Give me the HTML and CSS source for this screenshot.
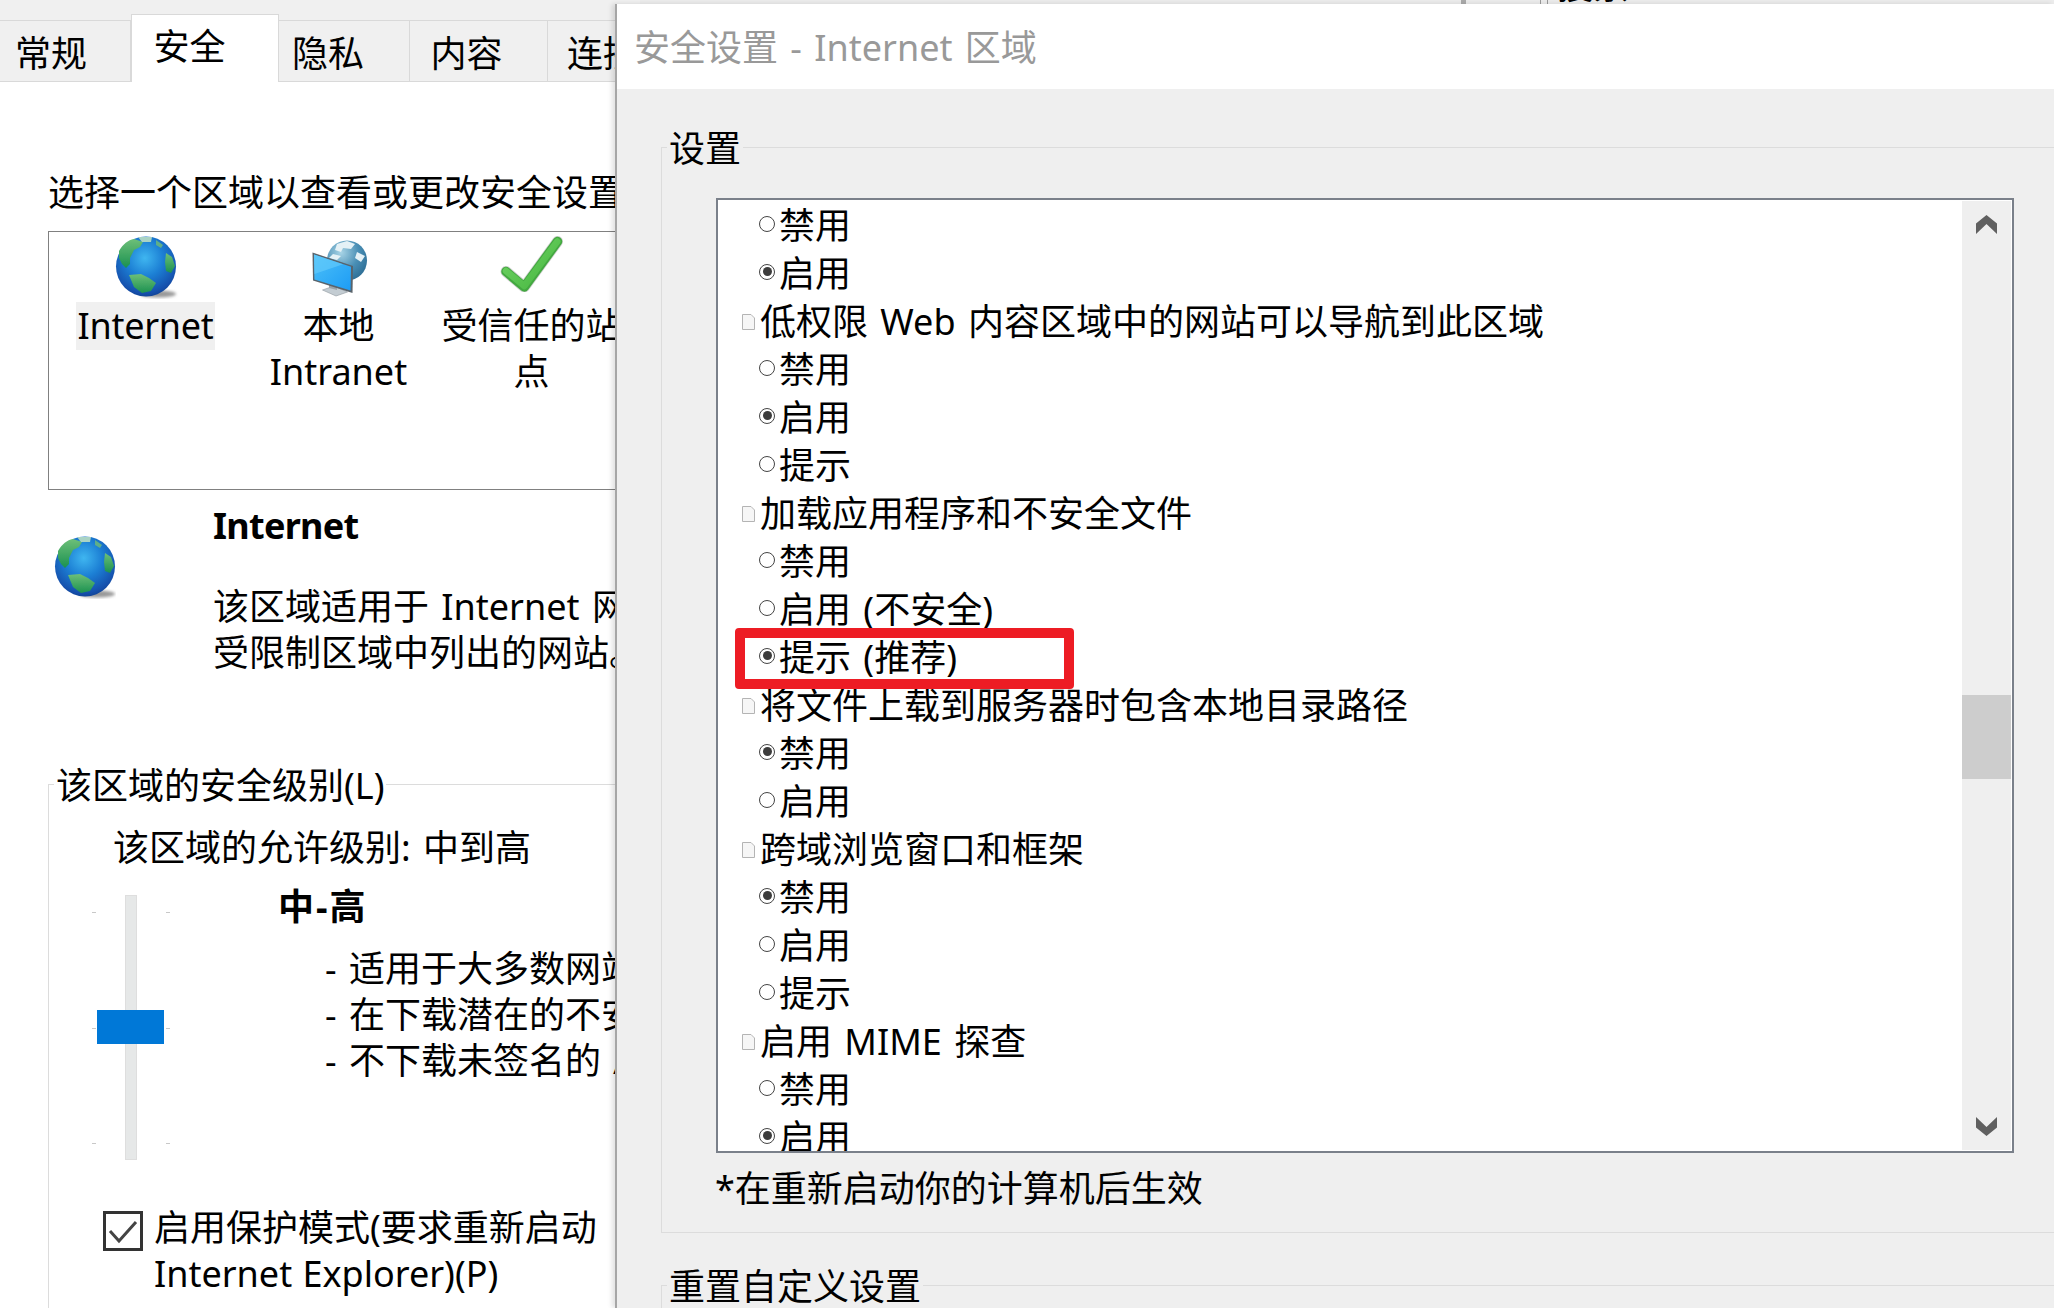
FILE: index.html
```html
<!DOCTYPE html>
<html lang="zh-CN">
<head>
<meta charset="utf-8">
<title>安全设置 - Internet 区域</title>
<link rel="stylesheet" href="styles.css">
</head>
<body>
<svg class="defs" width="0" height="0" aria-hidden="true">
  <defs>
    <radialGradient id="sea" cx="0.48" cy="0.36" r="0.68">
      <stop offset="0" stop-color="#3fb6f0"/>
      <stop offset="0.45" stop-color="#1c7fd4"/>
      <stop offset="0.85" stop-color="#1550ad"/>
      <stop offset="1" stop-color="#103f8c"/>
    </radialGradient>
    <linearGradient id="land" x1="0" y1="0" x2="0" y2="1">
      <stop offset="0" stop-color="#6dbf78"/>
      <stop offset="1" stop-color="#1a9150"/>
    </linearGradient>
    <radialGradient id="sea2" cx="0.35" cy="0.3" r="0.8">
      <stop offset="0" stop-color="#a8d4e6"/>
      <stop offset="0.55" stop-color="#4a8fb5"/>
      <stop offset="1" stop-color="#2a6a92"/>
    </radialGradient>
    <linearGradient id="screen" x1="0" y1="0" x2="1" y2="1">
      <stop offset="0" stop-color="#4cc0f8"/>
      <stop offset="1" stop-color="#1d9cf5"/>
    </linearGradient>
    <linearGradient id="tick" x1="0" y1="0" x2="1" y2="1">
      <stop offset="0" stop-color="#72d466"/>
      <stop offset="1" stop-color="#45b63f"/>
    </linearGradient>
    <filter id="soft"><feGaussianBlur stdDeviation="0.7"/></filter>
    <filter id="soft2"><feGaussianBlur stdDeviation="1.4"/></filter>
    <g id="globe">
      <ellipse cx="52" cy="62" rx="18" ry="3.5" fill="#999" filter="url(#soft2)"/>
      <circle cx="40" cy="34.5" r="30" fill="url(#sea)"/>
      <g transform="translate(10 4)" filter="url(#soft)">
        <path d="M3 15 C7 8 12 4 18 3 L27 6 L24 11 L18 14 L14 22 L14 28 L10 32 L6 28 L3 22 Z" fill="url(#land)"/>
        <path d="M50 17 L56 21 L59 30 L55 37 L50 35 L49 26 Z" fill="url(#land)"/>
        <path d="M13 39 L25 38 L33 42 L40 47 L35 55 L26 57 L18 51 Z" fill="url(#land)"/>
        <path d="M22 1 L36 1 L35 6 L26 6 Z" fill="#a9d3c4"/>
        <path d="M40 4 L47 9 L45 12 L40 9 Z" fill="#5fae88"/>
      </g>
    </g>
  </defs>
</svg>

<div class="backdrop">
  <span class="backdrop-shade"></span>
  <span class="backdrop-rule"></span>
  <span class="backdrop-rule second"></span>
  <span class="backdrop-text">搜索</span>
</div>

<section class="window options">
  <nav class="tabs">
    <span class="tab t1">常规</span>
    <span class="tab t2 active">安全</span>
    <span class="tab t3">隐私</span>
    <span class="tab t4">内容</span>
    <span class="tab t5">连接</span>
  </nav>
  <div class="pane">
    <p class="prompt">选择一个区域以查看或更改安全设置。</p>
    <div class="zones">
      <div class="zone">
        <svg class="zone-icon" viewBox="0 0 80 70"><use href="#globe"/></svg>
        <span class="zone-label selected">Internet</span>
      </div>
      <div class="zone">
        <svg class="zone-icon" viewBox="0 0 80 70">
          <circle cx="48" cy="28.5" r="20" fill="url(#sea2)"/>
          <path d="M38 12 L48 9 L56 12 L52 17 L44 16 L42 20 L36 18 Z M58 20 L66 24 L62 30 L56 26 Z M34 22 L42 24 L38 28 L30 26 Z" fill="#e4f1f6" filter="url(#soft)"/>
          <path d="M23.5 58 L35 54 L48.5 60 L37 64 Z" fill="#c3ccd2" stroke="#8e979d" stroke-width="0.6"/>
          <path d="M30 51 L30 56 L38 58 L38 54 Z" fill="#9aa2a8"/>
          <path d="M13.5 20.5 L54 34 L53.5 61 L14 48.5 Z" fill="#59636b"/>
          <path d="M15 22.5 L52 34.8 L51.6 58.6 L15.4 47.4 Z" fill="url(#screen)"/>
          <path d="M15 22.5 L44 32.2 L15.4 42 Z" fill="#67cdfb" opacity="0.6"/>
        </svg>
        <span class="zone-label">本地 Intranet</span>
      </div>
      <div class="zone">
        <svg class="zone-icon" viewBox="0 0 80 70">
          <polyline points="14,39.5 32.3,55 65.5,9.5" fill="none" stroke="#9a9a9a" stroke-width="11" stroke-linecap="round" stroke-linejoin="round" opacity="0.45" filter="url(#soft)"/>
          <polyline points="14,39.5 32.3,55 65.5,9.5" fill="none" stroke="#43a840" stroke-width="9.5" stroke-linecap="round" stroke-linejoin="round"/>
          <polyline points="14,39 32.3,54 65.3,9.5" fill="none" stroke="url(#tick)" stroke-width="6.5" stroke-linecap="round" stroke-linejoin="round"/>
        </svg>
        <span class="zone-label">受信任的站点</span>
      </div>
    </div>

    <div class="detail">
      <svg class="detail-icon" viewBox="9 3 62 64"><use href="#globe"/></svg>
      <div class="detail-text">
        <h2 class="detail-title">Internet</h2>
        <p class="detail-body">该区域适用于 Internet 网站，但不适用于列在受信任和<br>受限制区域中列出的网站。</p>
      </div>
    </div>

    <fieldset class="group level-group">
      <legend class="group-label">该区域的安全级别(L)</legend>
      <p class="allowed">该区域的允许级别: 中到高</p>
      <div class="level">
        <div class="slider">
          <span class="tick t-top-l"></span><span class="tick t-top-r"></span>
          <span class="tick t-mid-l"></span><span class="tick t-mid-r"></span>
          <span class="tick t-bot-l"></span><span class="tick t-bot-r"></span>
          <span class="track"></span>
          <span class="thumb"></span>
        </div>
        <div class="level-text">
          <strong class="level-name">中-高</strong>
          <ul class="level-list">
            <li>- 适用于大多数网站</li>
            <li>- 在下载潜在的不安全内容前提示</li>
            <li>- 不下载未签名的 ActiveX 控件</li>
          </ul>
        </div>
      </div>
      <div class="protect">
        <span class="checkbox">
          <svg viewBox="0 0 40 40" width="40" height="40"><polyline points="7,20 16,30 33,11" fill="none" stroke="#444" stroke-width="3"/></svg>
        </span>
        <span class="protect-text">启用保护模式(要求重新启动<br>Internet Explorer)(P)</span>
      </div>
    </fieldset>
  </div>
</section>

<section class="window dialog">
  <header class="dialog-title">安全设置 - Internet 区域</header>
  <div class="dialog-body">
    <fieldset class="group settings">
      <legend class="group-label">设置</legend>
      <div class="list">
        <div class="rows">
          <div class="row opt"><i class="radio"></i>禁用</div>
          <div class="row opt"><i class="radio on"></i>启用</div>
          <div class="row head"><svg class="file" viewBox="0 0 13 16"><path d="M0.5 0.5 H9 L12.5 4 V15.5 H0.5 Z" fill="#f6f6f6" stroke="#b4b4b4"/></svg>低权限 Web 内容区域中的网站可以导航到此区域</div>
          <div class="row opt"><i class="radio"></i>禁用</div>
          <div class="row opt"><i class="radio on"></i>启用</div>
          <div class="row opt"><i class="radio"></i>提示</div>
          <div class="row head"><svg class="file" viewBox="0 0 13 16"><path d="M0.5 0.5 H9 L12.5 4 V15.5 H0.5 Z" fill="#f6f6f6" stroke="#b4b4b4"/></svg>加载应用程序和不安全文件</div>
          <div class="row opt"><i class="radio"></i>禁用</div>
          <div class="row opt"><i class="radio"></i>启用 (不安全)</div>
          <div class="row opt"><i class="radio on"></i>提示 (推荐)</div>
          <div class="row head"><svg class="file" viewBox="0 0 13 16"><path d="M0.5 0.5 H9 L12.5 4 V15.5 H0.5 Z" fill="#f6f6f6" stroke="#b4b4b4"/></svg>将文件上载到服务器时包含本地目录路径</div>
          <div class="row opt"><i class="radio on"></i>禁用</div>
          <div class="row opt"><i class="radio"></i>启用</div>
          <div class="row head"><svg class="file" viewBox="0 0 13 16"><path d="M0.5 0.5 H9 L12.5 4 V15.5 H0.5 Z" fill="#f6f6f6" stroke="#b4b4b4"/></svg>跨域浏览窗口和框架</div>
          <div class="row opt"><i class="radio on"></i>禁用</div>
          <div class="row opt"><i class="radio"></i>启用</div>
          <div class="row opt"><i class="radio"></i>提示</div>
          <div class="row head"><svg class="file" viewBox="0 0 13 16"><path d="M0.5 0.5 H9 L12.5 4 V15.5 H0.5 Z" fill="#f6f6f6" stroke="#b4b4b4"/></svg>启用 MIME 探查</div>
          <div class="row opt"><i class="radio"></i>禁用</div>
          <div class="row opt"><i class="radio on"></i>启用</div>
        </div>
        <div class="scrollbar">
          <svg class="chevron" viewBox="0 0 21 19" width="21" height="19"><polygon points="10.5,0 21,8.5 21,19 10.5,9 0,19 0,8.5"/></svg>
          <span class="scroll-thumb"></span>
          <svg class="chevron down" viewBox="0 0 21 19" width="21" height="19"><polygon points="10.5,19 21,10.5 21,0 10.5,10 0,0 0,10.5"/></svg>
        </div>
        <span class="highlight"></span>
      </div>
      <p class="note">*在重新启动你的计算机后生效</p>
    </fieldset>
    <fieldset class="group reset">
      <legend class="group-label">重置自定义设置</legend>
    </fieldset>
  </div>
</section>
</body>
</html>
```

FILE: styles.css
```css
* { box-sizing: border-box; }
html, body { margin: 0; height: 100%; }
body {
  position: relative;
  width: 2054px;
  height: 1308px;
  overflow: hidden;
  background: #fff;
  color: #000;
  font-family: "Noto Sans", "Noto Sans CJK SC", sans-serif;
  font-size: 36px;
  line-height: 46px;
  word-spacing: 3px;
}
p, h2, ul { margin: 0; padding: 0; }
.defs { position: absolute; }

/* strip of the window behind the dialog */
.backdrop {
  position: absolute;
  left: 615px;
  top: 0;
  width: 1439px;
  height: 5px;
  overflow: hidden;
  background: #ececec;
  border-bottom: 1px solid #a8a8a8;
}
.backdrop-shade { position: absolute; left: 846px; top: 0; width: 5px; height: 5px; background: #aaa; }
.backdrop-rule { position: absolute; left: 925px; top: 0; width: 1px; height: 5px; background: #999; }
.backdrop-rule.second { left: 932px; }
.backdrop-text { position: absolute; left: 942px; top: -37px; }

/* left window */
.window { position: absolute; top: 0; }
.options { left: 0; width: 640px; height: 1308px; overflow: hidden; background: #fff; }
.tabs {
  display: flex;
  align-items: flex-end;
  height: 82px;
  background: #f0f0f0;
  white-space: nowrap;
}
.tab {
  height: 62px;
  padding-top: 10px;
  border-top: 1px solid #d9d9d9;
  border-right: 1px solid #d9d9d9;
  border-bottom: 1px solid #d9d9d9;
}
.t1 { width: 131px; padding-left: 15px; }
.t2 { width: 149px; padding-left: 22px; }
.t3 { width: 132px; padding-left: 13px; }
.t4 { width: 138px; padding-left: 20px; }
.t5 { flex: 1; padding-left: 19px; }
.tab.active {
  height: 68px;
  padding-top: 9px;
  background: #fff;
  border: 1px solid #d9d9d9;
  border-bottom: 0;
}
.pane { padding-left: 48px; }
.prompt { margin-top: 88px; white-space: nowrap; }
.zones {
  display: flex;
  width: 640px;
  height: 259px;
  margin-top: 15px;
  border: 1px solid #808080;
  border-right: 0;
  text-align: center;
}
.zone {
  display: flex;
  flex-direction: column;
  align-items: center;
  flex: 0 0 193px;
}
.zone-icon { display: block; flex: none; width: 80px; height: 70px; }
.zone-label { margin-top: 1px; line-height: 46px; }
.zone-label.selected { margin-top: 0; padding: 1px 2px; background: #f0f0f0; letter-spacing: -0.3px; }

.detail { display: flex; margin-top: 13px; }
.detail-icon { flex: none; width: 62px; height: 64px; margin: 32px 0 0 6px; }
.detail-text { margin-left: 97px; white-space: nowrap; }
.detail-title { font-size: 36px; line-height: 46px; font-weight: 700; letter-spacing: -0.7px; }
.detail-body { margin-top: 35px; }

.group {
  margin: 0;
  padding: 0;
  border: 1px solid #dcdcdc;
  min-width: 0;
}
.group-label { margin-left: 5px; padding: 4px 2px 0; line-height: 46px; white-space: nowrap; }
.level-group { width: 640px; height: 600px; margin-top: 83px; }
.allowed { margin: 16px 0 0 64px; white-space: nowrap; }
.level { display: flex; margin-left: 43px; }
.slider { position: relative; flex: none; width: 78px; height: 289px; }
.track {
  position: absolute;
  left: 33px;
  top: 24px;
  width: 12px;
  height: 265px;
  background: #e6e8e8;
  border: 1px solid #dedede;
}
.thumb { position: absolute; left: 5px; top: 139px; width: 67px; height: 34px; background: #0078d7; }
.tick { position: absolute; width: 4px; height: 1px; background: #c8c8c8; }
.t-top-l, .t-mid-l, .t-bot-l { left: 0; }
.t-top-r, .t-mid-r, .t-bot-r { left: 74px; }
.t-top-l, .t-top-r { top: 41px; }
.t-mid-l, .t-mid-r { top: 157px; }
.t-bot-l, .t-bot-r { top: 272px; }
.level-text { margin: 13px 0 0 108px; white-space: nowrap; }
.level-name { display: block; font-weight: 700; letter-spacing: 2px; }
.level-list { margin: 16px 0 0 47px; list-style: none; }
.protect { display: flex; margin: 45px 0 0 54px; word-spacing: 1px; }
.checkbox { flex: none; width: 40px; height: 40px; margin-top: 6px; border: 3px solid #333; }
.checkbox svg { display: block; margin: -3px; }
.protect-text { margin-left: 11px; white-space: nowrap; }

/* dialog */
.dialog {
  left: 615px;
  top: 4px;
  width: 1439px;
  height: 1304px;
  border-left: 2px solid #a6a6a6;
  background: #efefef;
  box-shadow: -3px 0 5px rgba(0, 0, 0, 0.12);
}
.dialog-title {
  height: 85px;
  padding: 21px 0 0 17px;
  background: #fff;
  color: #999;
}
.dialog-body { padding: 33px 0 0 44px; }
.settings { width: 1420px; height: 1111px; border-right: 0; }
.list {
  position: relative;
  display: flex;
  width: 1298px;
  height: 955px;
  margin: 26px 0 0 54px;
  padding: 1px;
  padding-left: 0;
  border: 2px solid #7a808a;
  background: #fff;
  overflow: hidden;
}
.rows { flex: 1; min-width: 0; height: 951px; overflow: hidden; padding-top: 1px; }
.row { display: flex; align-items: center; height: 48px; white-space: pre; }
.opt { padding-left: 41px; }
.head { padding-left: 24px; }
.radio {
  flex: none;
  display: flex;
  align-items: center;
  justify-content: center;
  width: 16px;
  height: 16px;
  margin: -5px 4px 0 0;
  border: 1px solid #444;
  border-radius: 50%;
  background: #fff;
}
.radio.on::after {
  content: "";
  width: 9px;
  height: 9px;
  border-radius: 50%;
  background: #3c3c3c;
}
.file { flex: none; width: 13px; height: 16px; margin: -1px 5px 0 0; }
.scrollbar {
  display: flex;
  flex: none;
  flex-direction: column;
  align-items: center;
  width: 49px;
  padding: 14px 0;
  background: #efefef;
}
.chevron { display: block; flex: none; fill: #606060; }
.chevron.down { margin-top: auto; }
.scroll-thumb { flex: none; width: 49px; height: 84px; margin-top: 461px; background: #cdcdcd; }
.highlight {
  position: absolute;
  left: 17px;
  top: 428px;
  width: 339px;
  height: 61px;
  border: 10px solid #ed1c24;
  border-radius: 4px;
}
.note { margin: 13px 0 0 53px; white-space: nowrap; }
.reset { width: 1420px; height: 100px; margin-top: 27px; border-right: 0; }
```
